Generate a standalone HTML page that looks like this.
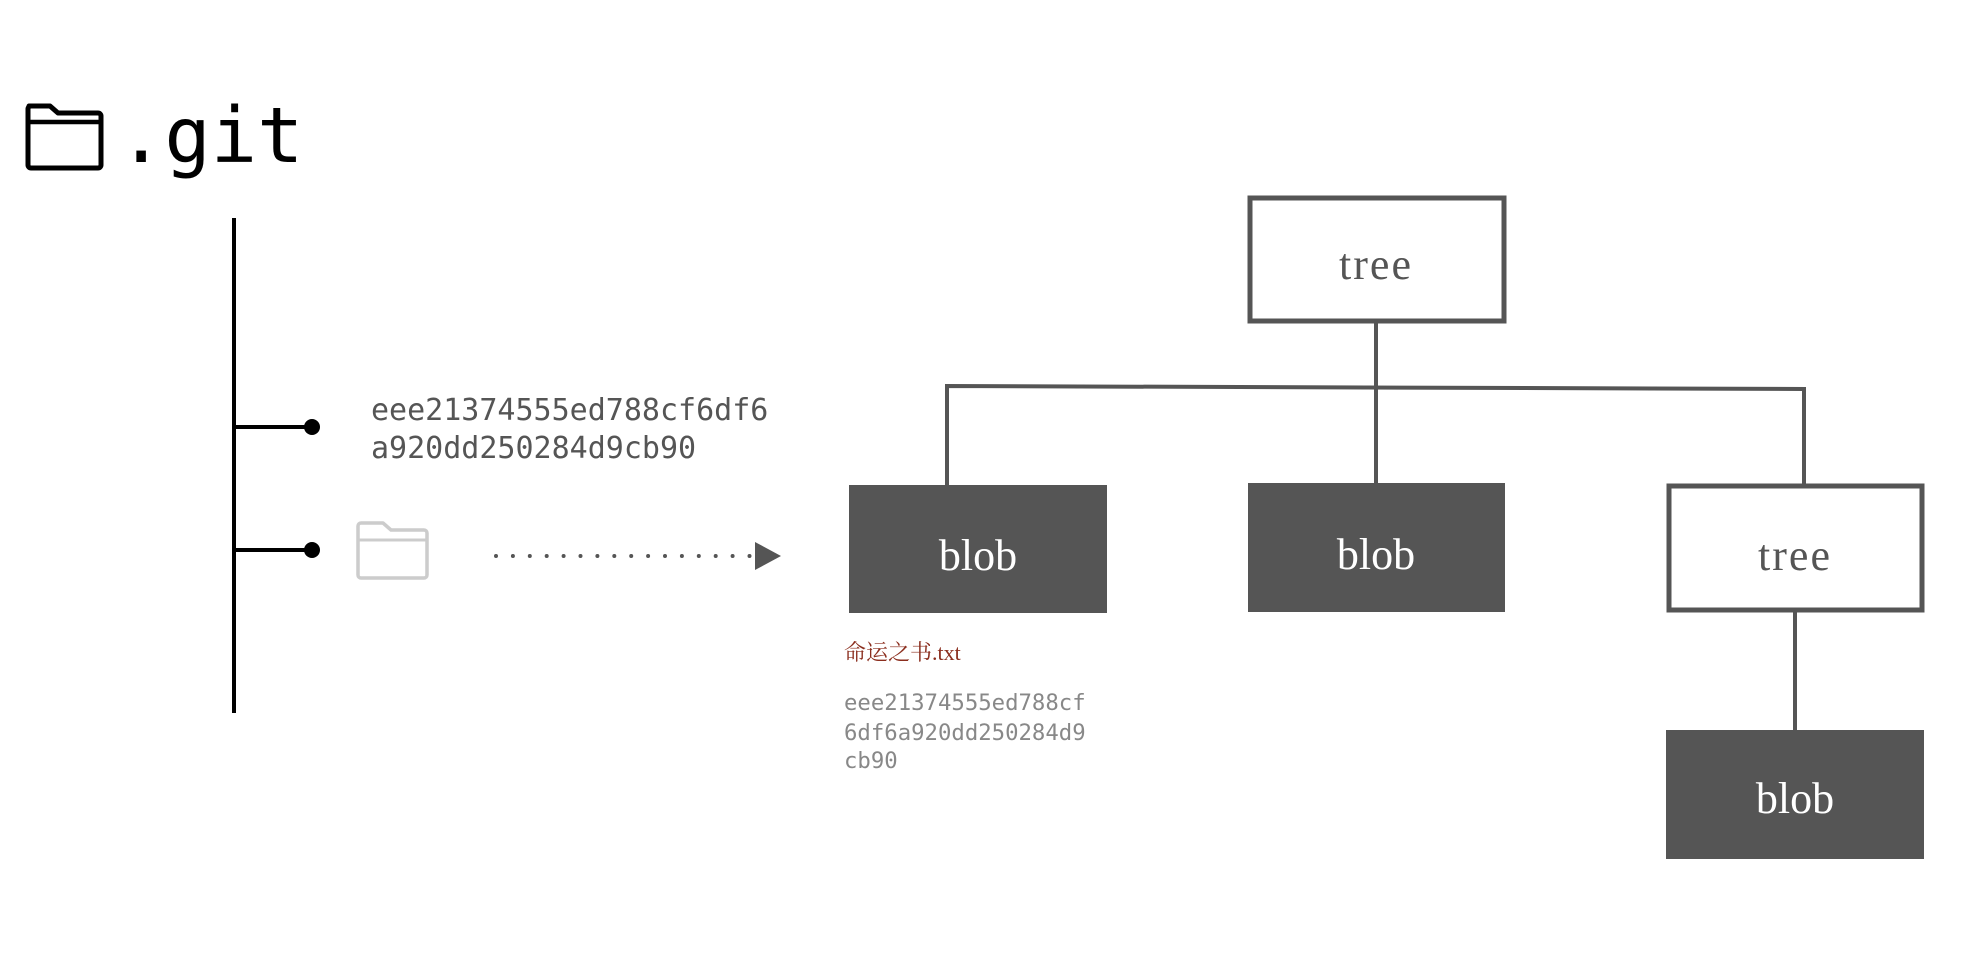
<!DOCTYPE html>
<html><head><meta charset="utf-8"><style>
html,body{margin:0;padding:0;background:#fff;}
svg{display:block;}
</style></head><body>
<svg width="1974" height="969" viewBox="0 0 1974 969" xmlns="http://www.w3.org/2000/svg">
<!-- .git header folder -->
<path d="M29 106 h21 l8 7 h40 a3 3 0 0 1 3 3 v49 a3 3 0 0 1 -3 3 h-67 a3 3 0 0 1 -3 -3 v-56 a3 3 0 0 1 3 -3 z" fill="none" stroke="#000" stroke-width="5" stroke-linejoin="round"/>
<line x1="27" y1="122" x2="99" y2="122" stroke="#000" stroke-width="4.5"/>
<text x="118" y="162" font-family="DejaVu Sans Mono, Liberation Mono, monospace" font-size="77" fill="#000">.git</text>
<!-- vertical tree line -->
<line x1="234" y1="218" x2="234" y2="713" stroke="#000" stroke-width="4"/>
<line x1="234" y1="427" x2="312" y2="427" stroke="#000" stroke-width="4"/>
<circle cx="312" cy="427" r="8" fill="#000"/>
<line x1="234" y1="550" x2="312" y2="550" stroke="#000" stroke-width="4"/>
<circle cx="312" cy="550" r="8" fill="#000"/>
<text font-family="DejaVu Sans Mono, Liberation Mono, monospace" font-size="30" fill="#555"><tspan x="371" y="420">eee21374555ed788cf6df6</tspan><tspan x="371" y="458">a920dd250284d9cb90</tspan></text>
<!-- gray folder -->
<path d="M361 523 h22 l8 7 h33 a3 3 0 0 1 3 3 v42 a3 3 0 0 1 -3 3 h-63 a3 3 0 0 1 -3 -3 v-49 a3 3 0 0 1 3 -3 z" fill="none" stroke="#ccc" stroke-width="3.5" stroke-linejoin="round"/>
<line x1="359" y1="540" x2="426" y2="540" stroke="#ccc" stroke-width="3"/>
<!-- dotted arrow -->
<line x1="496" y1="556" x2="750" y2="556" stroke="#555" stroke-width="4" stroke-linecap="round" stroke-dasharray="0 16.9"/>
<polygon points="755,542 781,556 755,570" fill="#555"/>
<!-- connectors -->
<line x1="1376" y1="321" x2="1376" y2="484" stroke="#555" stroke-width="4"/>
<polyline points="947,485 947,386 1804,389 1804,485" fill="none" stroke="#555" stroke-width="4"/>
<line x1="1795" y1="611" x2="1795" y2="731" stroke="#555" stroke-width="4"/>
<!-- boxes -->
<rect x="1250" y="198" width="254" height="123" fill="#fff" stroke="#555" stroke-width="5"/>
<rect x="849" y="485" width="258" height="128" fill="#555"/>
<rect x="1248" y="483" width="257" height="129" fill="#555"/>
<rect x="1669" y="486" width="253" height="124" fill="#fff" stroke="#555" stroke-width="5"/>
<rect x="1666" y="730" width="258" height="129" fill="#555"/>
<g font-family="Liberation Serif, DejaVu Serif, serif" font-size="44" text-anchor="middle">
<text x="1376" y="279" fill="#555" letter-spacing="2">tree</text>
<text x="978" y="570" fill="#fff">blob</text>
<text x="1376" y="569" fill="#fff">blob</text>
<text x="1795" y="570" fill="#555" letter-spacing="2">tree</text>
<text x="1795" y="813" fill="#fff">blob</text>
</g>
<text x="844" y="660" font-family="Liberation Serif, Noto Serif CJK SC, serif" font-size="22" fill="#8b2e1e">命运之书.txt</text>
<text font-family="DejaVu Sans Mono, Liberation Mono, monospace" font-size="22.3" fill="#888"><tspan x="844" y="710">eee21374555ed788cf</tspan><tspan x="844" y="740">6df6a920dd250284d9</tspan><tspan x="844" y="768">cb90</tspan></text>
</svg>
</body></html>
